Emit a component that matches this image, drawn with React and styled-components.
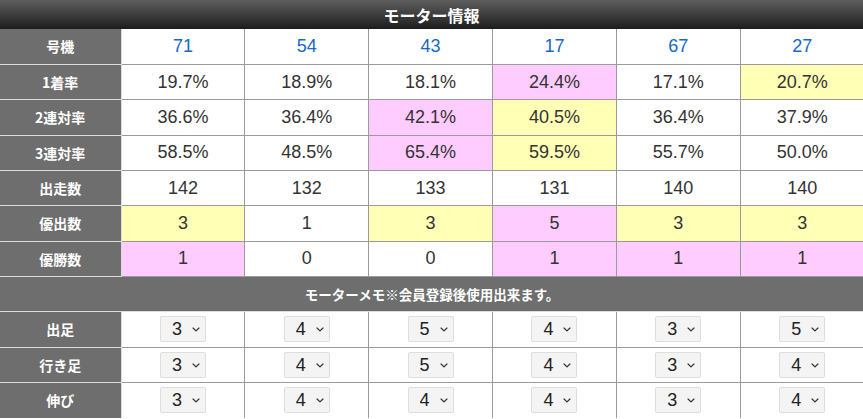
import React from "react";
import styled, { createGlobalStyle } from "styled-components";

const GlobalStyles = createGlobalStyle`
  body {
    margin: 0;
    background: #fff;
    font-family: "Liberation Sans", Arial, "Noto Sans CJK JP", sans-serif;
  }
`;

const boats = [71, 54, 43, 17, 67, 27];

// p = pink, y = yellow
const stats = [
  { label: "1着率", values: ["19.7%", "18.9%", "18.1%", "24.4%", "17.1%", "20.7%"], marks: ["", "", "", "p", "", "y"] },
  { label: "2連対率", values: ["36.6%", "36.4%", "42.1%", "40.5%", "36.4%", "37.9%"], marks: ["", "", "p", "y", "", ""] },
  { label: "3連対率", values: ["58.5%", "48.5%", "65.4%", "59.5%", "55.7%", "50.0%"], marks: ["", "", "p", "y", "", ""] },
  { label: "出走数", values: ["142", "132", "133", "131", "140", "140"], marks: ["", "", "", "", "", ""] },
  { label: "優出数", values: ["3", "1", "3", "5", "3", "3"], marks: ["y", "", "y", "p", "y", "y"] },
  { label: "優勝数", values: ["1", "0", "0", "1", "1", "1"], marks: ["p", "", "", "p", "p", "p"] },
];

const memo = [
  { label: "出足", values: [3, 4, 5, 4, 3, 5] },
  { label: "行き足", values: [3, 4, 5, 4, 3, 4] },
  { label: "伸び", values: [3, 4, 4, 4, 3, 4] },
];

function App() {
  return (
    <>
      <GlobalStyles />
      <Wrap>
        <Title>モーター情報</Title>
        <Table>
          <colgroup>
            <col style={{ width: 121 }} />
          </colgroup>
          <tbody>
            <tr>
              <Head>号機</Head>
              {boats.map((b) => (
                <Cell key={b}>
                  <BoatNo>{b}</BoatNo>
                </Cell>
              ))}
            </tr>
            {stats.map((row) => (
              <tr key={row.label}>
                <Head>{row.label}</Head>
                {row.values.map((v, i) => (
                  <Cell key={i} $mark={row.marks[i]}>
                    {v}
                  </Cell>
                ))}
              </tr>
            ))}
            <tr>
              <MemoBar colSpan={7}>モーターメモ※会員登録後使用出来ます。</MemoBar>
            </tr>
            {memo.map((row) => (
              <tr key={row.label}>
                <Head>{row.label}</Head>
                {row.values.map((v, i) => (
                  <Cell key={i}>
                    <SelectBox>
                      <Select defaultValue={v}>
                        {[1, 2, 3, 4, 5].map((n) => (
                          <option key={n} value={n}>
                            {n}
                          </option>
                        ))}
                      </Select>
                      <Chevron viewBox="0 0 10 6" aria-hidden="true">
                        <path d="M1.3 1.2 L5 4.7 L8.7 1.2" fill="none" stroke="#333" strokeWidth="1.6" strokeLinecap="round" strokeLinejoin="round" />
                      </Chevron>
                    </SelectBox>
                  </Cell>
                ))}
              </tr>
            ))}
          </tbody>
        </Table>
      </Wrap>
    </>
  );
}

export default App;

const Wrap = styled.div`
  width: 863px;
  overflow: hidden;
`;

const Title = styled.div`
  height: 29px;
  display: flex;
  align-items: center;
  justify-content: center;
  background: linear-gradient(to bottom, #5e5e5e 0%, #3a3a3a 55%, #1d1d1d 100%);
  color: #fff;
  font-family: "Noto Sans CJK JP", sans-serif;
  font-weight: bold;
  font-size: 16px;
`;

const Table = styled.table`
  width: 864px;
  border-collapse: collapse;
  table-layout: fixed;
  border-style: hidden;

  tr {
    height: 35.35px;
  }
`;

const Head = styled.th`
  background: #6e6e6e;
  color: #fff;
  font-family: "Noto Sans CJK JP", sans-serif;
  font-weight: bold;
  font-size: 14px;
  border: 1px solid #dcdcdc;
  padding: 0;
  text-align: center;
`;

const markColors = { p: "#ffccff", y: "#ffffb6" };

const Cell = styled.td`
  background: ${(p) => markColors[p.$mark] || "#fff"};
  border: 1px solid #9a9a9a;
  color: #333;
  font-size: 18px;
  text-align: center;
  padding: 0;
`;

const BoatNo = styled.span`
  color: #1569c7;
`;

const MemoBar = styled.td`
  background: #6e6e6e;
  color: #fff;
  font-family: "Noto Sans CJK JP", sans-serif;
  font-weight: bold;
  font-size: 13.5px;
  text-align: center;
  border-top: 1px solid #9a9a9a;
  border-bottom: 1px solid #dcdcdc;
  padding: 0;
`;

const SelectBox = styled.span`
  position: relative;
  display: inline-block;
  vertical-align: middle;
`;

const Select = styled.select`
  appearance: none;
  display: block;
  width: 46px;
  height: 26px;
  padding: 0 0 0 11px;
  border: 1px solid #dedede;
  border-radius: 2px;
  background: #f4f4f4;
  color: #222;
  font-family: "Liberation Sans", Arial, sans-serif;
  font-size: 18px;
  text-align: left;
  outline: none;
`;

const Chevron = styled.svg`
  position: absolute;
  right: 6px;
  top: 11px;
  width: 8px;
  height: 5px;
  pointer-events: none;
`;
